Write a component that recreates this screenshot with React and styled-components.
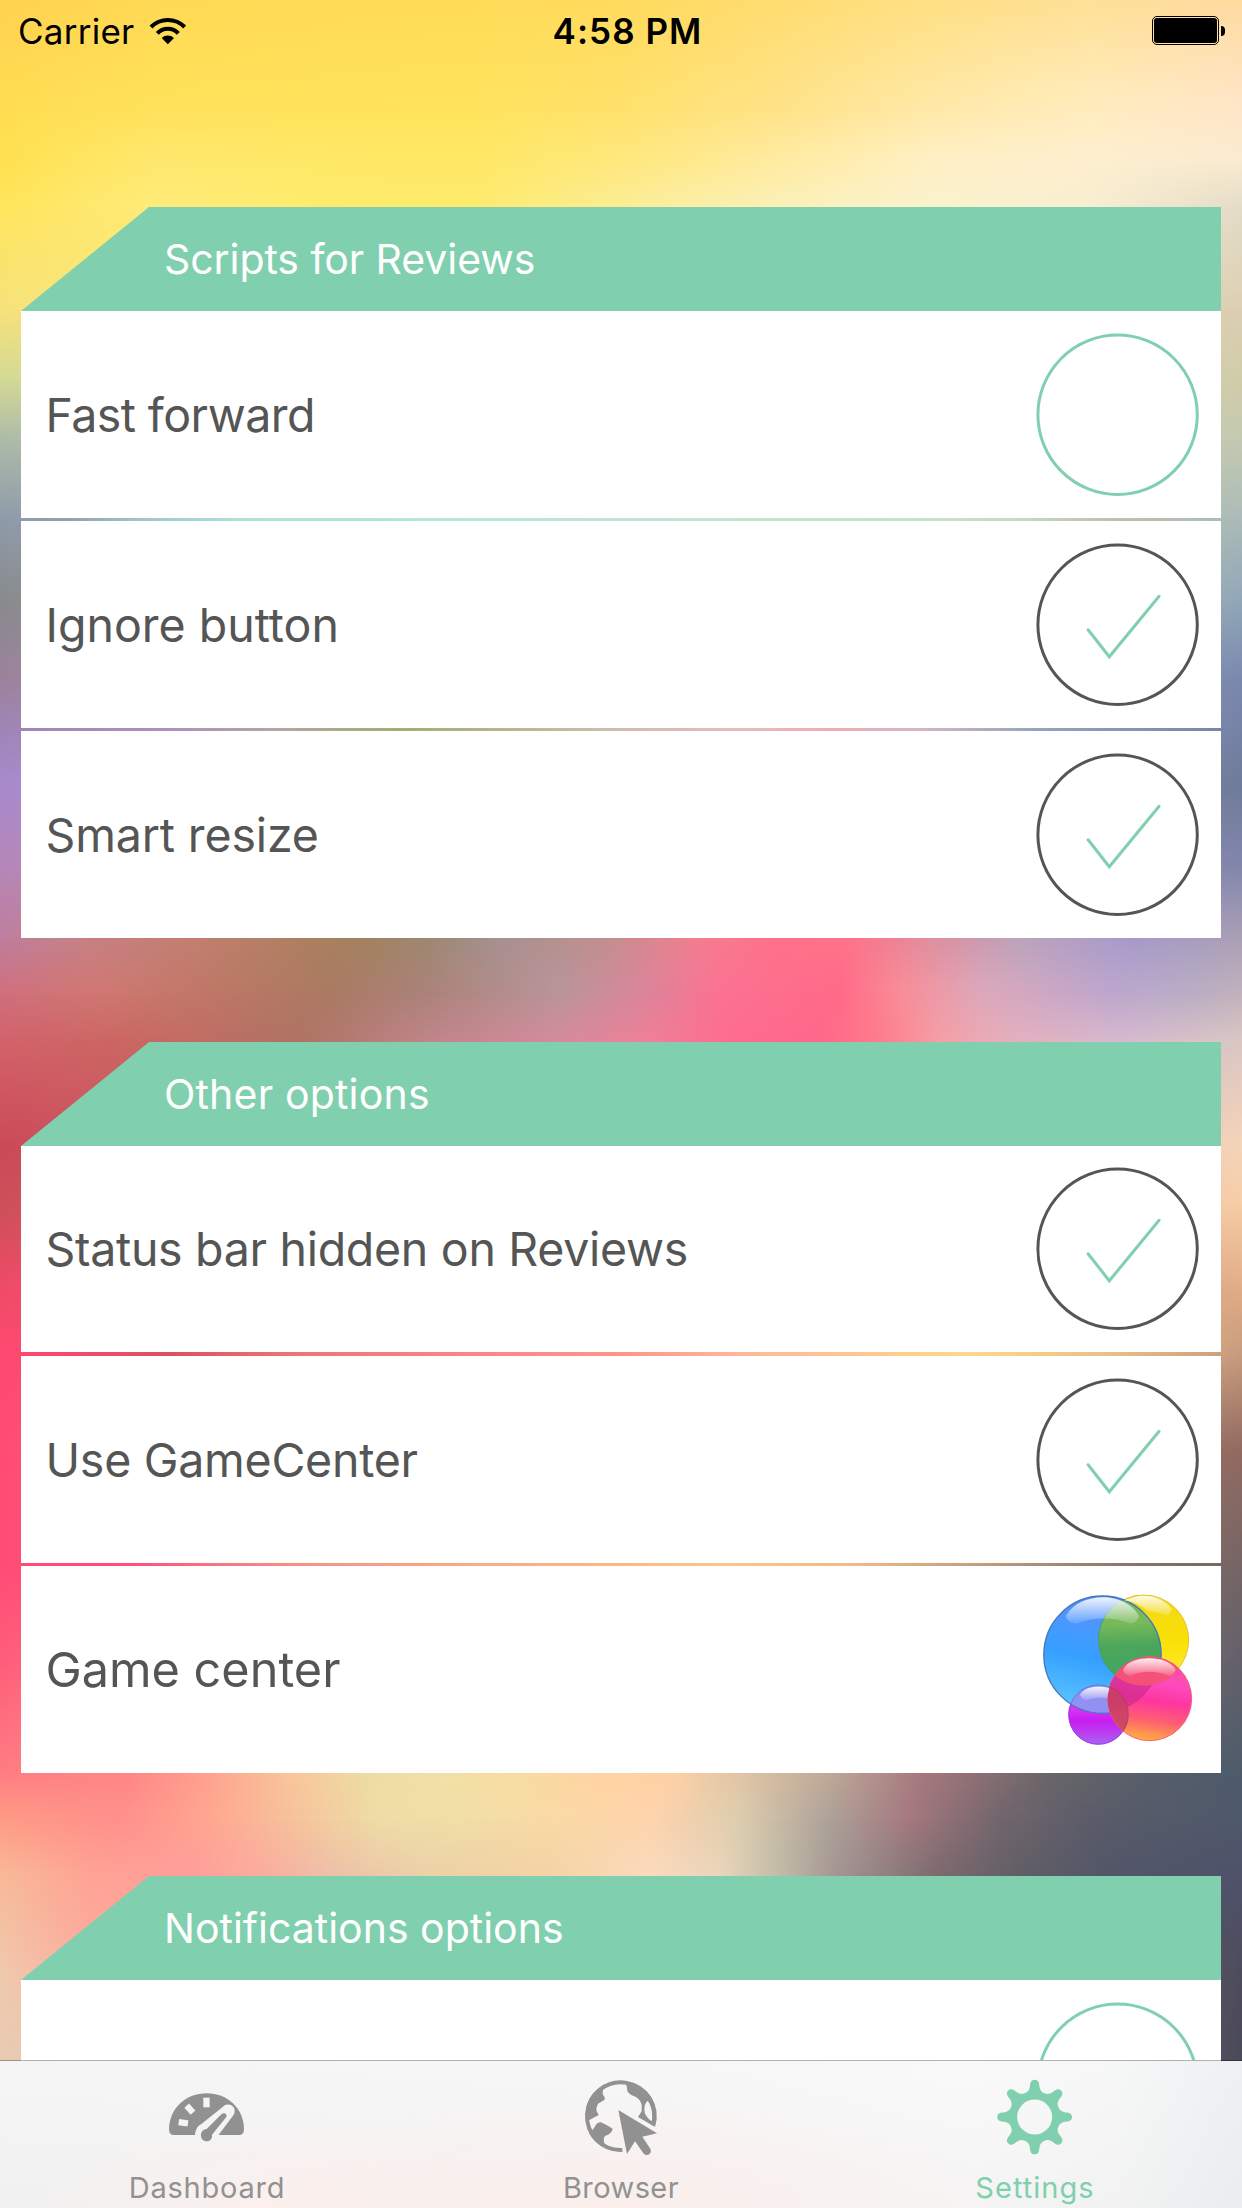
import React from 'react';
import styled, { createGlobalStyle } from 'styled-components';

const MINT = '#80cfae';
const INK = '#555555';
const GREY = '#919191';
const SCREEN_WIDTH = 1242;

const GlobalStyle = createGlobalStyle`
  *, *::before, *::after { box-sizing: border-box; }
  html, body { margin: 0; padding: 0; }
  body { font-family: Inter, "Open Sans", sans-serif; background: #fff; }
  svg { display: block; flex: none; }
`;

/* Wallpaper: horizontal colour rows that fade into each other vertically. */
const wallpaperRows = [
  { y: 0, stops: [[0, '#ffd24f'], [155, '#ffda55'], [466, '#ffdc58'], [621, '#ffdb5e'], [776, '#ffdd70'], [931, '#ffe083'], [1087, '#ffe096'], [1242, '#ffdba0']] },
  { y: 105, stops: [[0, '#ffdd52'], [155, '#ffe15a'], [466, '#ffe35c'], [621, '#ffe16a'], [776, '#ffe287'], [931, '#ffe8a6'], [1087, '#ffecbc'], [1242, '#ffe5c8']] },
  { y: 160, stops: [[0, '#ffe150'], [155, '#ffe86e'], [310, '#ffe967'], [466, '#ffe864'], [621, '#ffe87e'], [776, '#ffeba0'], [931, '#fff0c4'], [1087, '#feefd0'], [1242, '#faebd0']] },
  { y: 207, stops: [[0, '#ffe55c'], [155, '#ffeb7a'], [310, '#ffeb6c'], [466, '#ffea6c'], [621, '#fbed95'], [776, '#fbf0b8'], [931, '#fbf2cd'], [1087, '#f7eed0'], [1242, '#e4dcc8']] },
  { y: 311, stops: [[0, '#f6e27c'], [155, '#fbe77c'], [621, '#eee6a0'], [1242, '#dccfb2']] },
  { y: 380, stops: [[0, '#d3d995'], [621, '#dce3b0'], [1242, '#d0cca9']] },
  { y: 440, stops: [[0, '#acbaa9'], [621, '#c8e4c8'], [1242, '#c4c9b1']] },
  { y: 519, stops: [[0, '#8f9aa9'], [70, '#93a3ae'], [140, '#a2c6c9'], [240, '#abe4d7'], [466, '#b9e7d6'], [776, '#c0e6d0'], [931, '#c6e3c6'], [1010, '#c7dec0'], [1110, '#c0c1ae'], [1242, '#aabbb8']] },
  { y: 600, stops: [[0, '#888a8d'], [621, '#c8c8b8'], [1242, '#92a7b8']] },
  { y: 680, stops: [[0, '#9c829d'], [621, '#c8c0b4'], [1242, '#7a88ae']] },
  { y: 729, stops: [[0, '#9e85b6'], [155, '#ad8fbd'], [270, '#b3a5a5'], [400, '#a6ad72'], [480, '#b4b384'], [600, '#cbbdab'], [740, '#e8bcbc'], [830, '#f0adb2'], [920, '#d4b6c5'], [1040, '#93a5bb'], [1242, '#7682a6']] },
  { y: 785, stops: [[0, '#a78acd'], [621, '#c8a8b0'], [1242, '#6f7b9a']] },
  { y: 865, stops: [[0, '#b587b9'], [621, '#c8a0a0'], [1242, '#8186ac']] },
  { y: 938, stops: [[0, '#bf7e9e'], [80, '#c68186'], [190, '#c37f70'], [310, '#ac805f'], [370, '#a2835f'], [430, '#9e8873'], [500, '#a69291'], [600, '#c0908f'], [700, '#f47d90'], [776, '#ff718a'], [850, '#ff7389'], [930, '#e08f9f'], [1020, '#bba4bc'], [1130, '#a79acb'], [1242, '#aaa0b5']] },
  { y: 990, stops: [[0, '#cf7080'], [100, '#d07872'], [220, '#bd7866'], [330, '#aa7a62'], [430, '#ab837a'], [560, '#b9959a'], [640, '#d8869a'], [720, '#fc7292'], [840, '#ff6a88'], [900, '#f98d97'], [980, '#dda8ba'], [1110, '#bca6cd'], [1190, '#b8acc4'], [1242, '#c0b0bb']] },
  { y: 1042, stops: [[0, '#d2626a'], [110, '#cc6663'], [200, '#c06c64'], [300, '#ae7364'], [430, '#c0858a'], [560, '#d58b9c'], [650, '#f07f98'], [730, '#fd6c8d'], [820, '#ff678a'], [880, '#ff7c8a'], [940, '#f59fa5'], [1010, '#e5afbd'], [1120, '#d6b9cf'], [1242, '#dac7c4']] },
  { y: 1146, stops: [[0, '#cb4a58'], [150, '#cd5760'], [621, '#f58090'], [1242, '#f5d4b9']] },
  { y: 1205, stops: [[0, '#cd4f59'], [621, '#f58890'], [1242, '#f6cda6']] },
  { y: 1290, stops: [[0, '#f04a68'], [621, '#ff9490'], [1242, '#dfac86']] },
  { y: 1354, stops: [[0, '#ff4a71'], [80, '#f24b6c'], [170, '#dc5162'], [290, '#ee7378'], [466, '#fa8588'], [621, '#ff948c'], [750, '#ffba9a'], [870, '#fdca90'], [970, '#fbda8c'], [1100, '#edc287'], [1242, '#c79b7d']] },
  { y: 1450, stops: [[0, '#ff4b74'], [621, '#fbb080'], [1242, '#916a61']] },
  { y: 1564, stops: [[0, '#ff4c76'], [130, '#ff5079'], [220, '#f87683'], [310, '#f69488'], [466, '#f9aa88'], [621, '#fbb985'], [720, '#fcc686'], [850, '#efbc88'], [1000, '#bc987c'], [1130, '#8b7468'], [1242, '#756565']] },
  { y: 1660, stops: [[0, '#ff5d7b'], [621, '#ffd0a0'], [1242, '#63606b']] },
  { y: 1773, stops: [[0, '#ff7d83'], [130, '#ff8787'], [200, '#ff9f8d'], [290, '#f9c69b'], [370, '#eddda3'], [440, '#f2e1a5'], [520, '#f8dca1'], [590, '#ffd4a1'], [670, '#ffd1a6'], [740, '#e0c6a6'], [830, '#bfa898'], [920, '#a7797f'], [980, '#8c7073'], [1050, '#686669'], [1150, '#575e6b'], [1242, '#4d5b6a']] },
  { y: 1820, stops: [[0, '#ff9b85'], [120, '#ff908c'], [210, '#ffa790'], [290, '#f6c19b'], [380, '#eedda6'], [460, '#f0dea7'], [560, '#fad9a5'], [650, '#ffd4ad'], [740, '#dccdaf'], [830, '#aca198'], [910, '#a4787e'], [1000, '#71656c'], [1100, '#595b69'], [1242, '#4e596a']] },
  { y: 1876, stops: [[0, '#f8ba98'], [90, '#ffa395'], [190, '#ff9e9a'], [260, '#fbab9f'], [330, '#eebfa8'], [420, '#ebd0a9'], [540, '#f3d3a4'], [650, '#f9dabd'], [720, '#ead5bb'], [780, '#c0bba6'], [840, '#a29392'], [940, '#7a696d'], [1020, '#605e65'], [1110, '#515668'], [1242, '#4f526a']] },
  { y: 1985, stops: [[0, '#efcbb0'], [60, '#f6b8a4'], [150, '#ffa5a0'], [621, '#f0d0b0'], [1242, '#4c4b5b']] },
  { y: 2060, stops: [[0, '#e7cbb2'], [621, '#e0c8b0'], [1242, '#4b4a59']] },
];

const rowGradient = (stops) =>
  `linear-gradient(90deg, ${stops
    .map(([x, color]) => `${color} ${((x / SCREEN_WIDTH) * 100).toFixed(2)}%`)
    .join(', ')})`;

const Screen = styled.div`
  position: relative;
  width: ${SCREEN_WIDTH}px;
  height: 2208px;
  overflow: hidden;
  display: flex;
  flex-direction: column;
`;

const Wallpaper = styled.div`
  position: absolute;
  inset: 0;
  z-index: 0;
`;

const WallpaperBand = styled.div`
  height: ${(p) => p.$height}px;
  background: ${(p) => p.$from};

  &::before {
    content: '';
    display: block;
    height: 100%;
    background: ${(p) => p.$to};
    mask-image: linear-gradient(180deg, transparent, #000);
  }
`;

const Content = styled.main`
  position: relative;
  z-index: 1;
  height: 2060px;
  overflow: hidden;
  display: flex;
  flex-direction: column;
`;

const StatusBar = styled.header`
  flex: none;
  height: 62px;
  margin-bottom: 145px;
  padding: 0 17px 0 18px;
  display: grid;
  grid-template-columns: 1fr auto 1fr;
  align-items: center;
  color: #000;
  font-size: 35px;
  line-height: 42px;
`;

const StatusLeft = styled.div`
  display: flex;
  align-items: center;
  gap: 15px;
  letter-spacing: 0.25px;
`;

const Clock = styled.div`
  padding-left: 12px;
  font-weight: 600;
  letter-spacing: 1.05px;
`;

const Battery = styled.div`
  justify-self: end;
  display: flex;
  align-items: center;
  gap: 2px;
  margin-bottom: 1px;

  &::after {
    content: '';
    width: 4px;
    height: 10px;
    border-radius: 0 5px 5px 0;
    background: #000;
  }
`;

const BatteryCase = styled.div`
  width: 67px;
  height: 29px;
  padding: 1px;
  border: 1px solid #000;
  border-radius: 5px;
`;

const BatteryCharge = styled.div`
  height: 100%;
  border-radius: 3px;
  background: #000;
`;

const Section = styled.section`
  flex: none;
  margin: 0 21px ${(p) => p.$gap}px;
`;

const SectionHeader = styled.h2`
  display: flex;
  align-items: center;
  height: 104px;
  margin: 0;
  padding: 0 0 1px 143px;
  background: ${MINT};
  clip-path: polygon(128px 0, 100% 0, 100% 100%, 0 100%);
  color: #fff;
  font-size: 41px;
  font-weight: 400;
  letter-spacing: ${(p) => p.$tracking}px;
`;

const Options = styled.div`
  display: flex;
  flex-direction: column;
  gap: 3px;
`;

const Option = styled.div`
  display: flex;
  align-items: center;
  justify-content: space-between;
  height: ${(p) => (p.$short ? 206 : 207)}px;
  margin-bottom: ${(p) => (p.$short ? 1 : 0)}px;
  padding: 0 21px 0 24.500px;
  background: #fff;
  color: ${INK};
`;

const OptionLabel = styled.span`
  font-size: ${(p) => (p.$large ? 48.6 : 46.5)}px;
  letter-spacing: ${(p) => p.$tracking}px;
  white-space: nowrap;
`;

const TabBar = styled.nav`
  position: relative;
  z-index: 1;
  display: grid;
  grid-template-columns: repeat(3, 1fr);
  height: 148px;
  background:
    linear-gradient(90deg, #a18e7d 21px, #b1b1b1 21px, #b1b1b1 1221px, #34343e 1221px) top / 100% 1px no-repeat,
    radial-gradient(ellipse 420px 110px at 600px 148px, rgba(252, 238, 235, 0.9), rgba(252, 238, 235, 0)),
    radial-gradient(ellipse 260px 90px at 290px 148px, rgba(253, 240, 237, 0.9), rgba(253, 240, 237, 0)),
    linear-gradient(180deg, rgba(255, 255, 255, 0.2), rgba(236, 234, 234, 0.25)),
    linear-gradient(90deg, #f3f3f3 0%, #f4f4f4 30%, #f6f5f5 55%, #f8f8f8 78%, #f4f5f5 90%, #e9eef0 100%);
`;

const Tab = styled.div`
  display: flex;
  flex-direction: column;
  align-items: center;
  padding-top: 17px;
  color: ${(p) => (p.$active ? MINT : GREY)};
`;

const TabLabel = styled.span`
  margin-top: 13px;
  font-size: 29px;
  line-height: 36px;
  letter-spacing: ${(p) => p.$tracking}px;
`;

function WifiIcon() {
  return (
    <svg width="38" height="28" viewBox="449 46 114 84" fill="none" stroke="#000" strokeWidth="12.500">
      <path d="M455 76a71 71 0 0 1 101 0" />
      <path d="M474 95a43 43 0 0 1 63 0" />
      <path d="M487 109a27 27 0 0 1 37 0l-18.500 19z" fill="#000" stroke="none" />
    </svg>
  );
}

function ToggleCircle({ checked }) {
  return (
    <svg width="164" height="164" viewBox="-81.600 -81.800 164 164" fill="none">
      <circle r="79.700" stroke={checked ? INK : MINT} strokeWidth="3" />
      {checked && (
        <path d="M-29.500 5-8.300 32 41.500-28.500" stroke={MINT} strokeWidth="3" strokeLinecap="round" />
      )}
    </svg>
  );
}

function GameCenterIcon() {
  return (
    <svg width="160" height="160" viewBox="60 60 480 480">
      <defs>
        <linearGradient id="gcBlue" x1=".6" y1="0" x2=".35" y2="1">
          <stop offset="0" stopColor="#5a8cfb" />
          <stop offset=".3" stopColor="#4b98ff" />
          <stop offset=".55" stopColor="#359fff" />
          <stop offset="1" stopColor="#5cc6ff" />
        </linearGradient>
        <linearGradient id="gcYellow" x1="0" y1="0" x2="0" y2="1">
          <stop offset="0" stopColor="#f2d818" />
          <stop offset=".5" stopColor="#f9e006" />
          <stop offset="1" stopColor="#ffec38" />
        </linearGradient>
        <linearGradient id="gcGreen" x1=".5" y1="0" x2=".55" y2="1">
          <stop offset="0" stopColor="#78b566" />
          <stop offset=".3" stopColor="#78ba5a" />
          <stop offset=".55" stopColor="#4ca65a" />
          <stop offset="1" stopColor="#3ca866" />
        </linearGradient>
        <linearGradient id="gcPink" x1=".6" y1="0" x2=".45" y2="1">
          <stop offset="0" stopColor="#f85690" />
          <stop offset=".3" stopColor="#fd4abf" />
          <stop offset=".52" stopColor="#fd369f" />
          <stop offset=".76" stopColor="#ff6070" />
          <stop offset="1" stopColor="#ffb13b" />
        </linearGradient>
        <linearGradient id="gcPurple" x1="0" y1="0" x2="0" y2="1">
          <stop offset=".4" stopColor="#d835f4" />
          <stop offset=".6" stopColor="#c81cf0" />
          <stop offset="1" stopColor="#ac60f2" />
        </linearGradient>
        <linearGradient id="gcShine" x1="0" y1="0" x2="0" y2="1">
          <stop offset="0" stopColor="#fff" stopOpacity=".9" />
          <stop offset="1" stopColor="#fff" stopOpacity=".12" />
        </linearGradient>
        <clipPath id="inBlue"><circle cx="247.500" cy="254" r="176" /></clipPath>
        <clipPath id="inPink"><circle cx="389" cy="386" r="126" /></clipPath>
      </defs>
      <circle cx="371" cy="210" r="135" fill="url(#gcYellow)" stroke="#dfc632" strokeWidth="3" />
      <circle cx="235" cy="434" r="89" fill="url(#gcPurple)" stroke="#8b35e6" strokeWidth="3" />
      <circle cx="247.500" cy="254" r="176" fill="url(#gcBlue)" />
      <g clipPath="url(#inBlue)">
        <circle cx="371" cy="210" r="136" fill="url(#gcGreen)" stroke="#4b9c70" strokeWidth="3" />
        <circle cx="235" cy="434" r="89" fill="#9390f4" stroke="#6278d2" strokeWidth="3" />
      </g>
      <circle cx="247.500" cy="254" r="176" fill="none" stroke="#4278bd" strokeWidth="4" />
      <path d="M138 137C160 100 205 82 249 82S340 103 357 139C352 154 342 160 331 161C285 141 220 139 169 161C151 158 139 150 138 137Z" fill="url(#gcShine)" />
      <path d="M312 91Q345 77 371 77Q422 77 455 116Q455 130 440 138Q413 126 384 123Q356 98 312 91Z" fill="url(#gcShine)" />
      <circle cx="389" cy="386" r="126" fill="url(#gcPink)" stroke="#f0607c" strokeWidth="3" />
      <g clipPath="url(#inPink)">
        <circle cx="247.500" cy="254" r="174" fill="#c42888" fillOpacity=".58" />
        <circle cx="371" cy="210" r="137" fill="#f65374" fillOpacity=".9" />
        <circle cx="235" cy="434" r="90" fill="#c84065" fillOpacity=".88" stroke="#a33a62" strokeWidth="2" />
      </g>
      <path d="M309 301C320 274 354 265 388 265S455 276 467 300Q461 315 447 318Q388 293 329 318Q313 314 309 301Z" fill="url(#gcShine)" />
      <path d="M180 374C190 356 211 350 235 350S268 353 268 358Q263 370 263 385Q232 379 201 390Q184 387 180 374Z" fill="url(#gcShine)" />
    </svg>
  );
}

function GaugeIcon() {
  return (
    <svg width="80" height="80" viewBox="201 112 240 240">
      <mask id="dialCuts">
        <rect x="200" y="112" width="240" height="240" fill="#fff" />
        <g fill="#000">
          <rect x="310" y="174" width="19" height="29" />
          <rect x="260" y="194.500" width="19" height="28" transform="rotate(-42 269.500 208.500)" />
          <rect x="236" y="240" width="28" height="18.500" transform="rotate(7 250 249)" />
          <path d="M285 288Q285 262 305 252L368 202A19.500 19.500 0 0 1 400 227L354 288Z" />
        </g>
      </mask>
      <path
        d="M207 267C209 205 258 161 320 161S430 205 432 267Q432 286 417 286H222Q207 286 207 267Z"
        fill="currentColor"
        mask="url(#dialCuts)"
      />
      <path
        d="M303 289C302 278 308 270 320 268L365 223C372 217 383 223 379 232L336 285C339 311 304 310 303 289Z"
        fill="currentColor"
      />
    </svg>
  );
}

function GlobeIcon() {
  return (
    <svg width="80" height="80" viewBox="124 112 240 240" fill="currentColor">
      <path
        d="M248 331A101.500 101.500 0 1 1 341 258"
        fill="none"
        stroke="currentColor"
        strokeWidth="12"
      />
      <path d="M184 142L190 154Q186 163 195 172V180L175 192Q168 204 171 215L177 226L149 241L138 236Q136 170 184 142Z" />
      <path d="M148 279Q160 272 165 262Q170 248 184 248L202 257L219 267Q217 282 196 289Q189 298 195 314L190 322Q160 305 148 279Z" />
      <path
        fillRule="evenodd"
        d="M259 130L264 157Q275 169 287 171Q300 176 306 195V215L295 232L345 261Q358 190 320 155Q295 130 259 130ZM324 183Q333 194 337 216L338 244Q328 243 316 222Q310 195 324 183Z"
      />
      <path d="M236 211L352 281L308 291L331 326C341 341 321 354 311 341L286 305L262 343Z" />
    </svg>
  );
}

const toothOutline = [
  [-29.4, -71], [-20.2, -74.8], [-17, -80], [-14.5, -90],
  [-13.5, -100], [-13, -112], [0, -112],
  [13, -112], [13.5, -100], [14.5, -90],
  [17, -80], [20.2, -74.8], [29.4, -71],
];

const gearPath = (() => {
  let d = '';
  for (let i = 0; i < 8; i += 1) {
    const a = (i * Math.PI) / 4;
    const p = toothOutline.map(([x, y]) =>
      `${(x * Math.cos(a) - y * Math.sin(a)).toFixed(2)} ${(x * Math.sin(a) + y * Math.cos(a)).toFixed(2)}`);
    d += `${i ? 'L' : 'M'}${p[0]}C${p[1]} ${p[2]} ${p[3]}C${p[4]} ${p[5]} ${p[6]}C${p[7]} ${p[8]} ${p[9]}C${p[10]} ${p[11]} ${p[12]}`;
  }
  return `${d}ZM52.500 0A52.500 52.500 0 1 0 -52.500 0A52.500 52.500 0 1 0 52.500 0Z`;
})();

function GearIcon() {
  return (
    <svg width="80" height="80" viewBox="-119 -120 240 240">
      <path d={gearPath} fill="currentColor" fillRule="evenodd" />
    </svg>
  );
}

const sections = [
  {
    title: 'Scripts for Reviews',
    tracking: -0.08,
    gap: 104,
    options: [
      { label: 'Fast forward', tracking: -0.58, checked: false },
      { label: 'Ignore button', tracking: 0, checked: true },
      { label: 'Smart resize', tracking: -0.14, checked: true },
    ],
  },
  {
    title: 'Other options',
    tracking: 0.18,
    gap: 103,
    options: [
      { label: 'Status bar hidden on Reviews', tracking: -0.3, checked: true, short: true },
      { label: 'Use GameCenter', tracking: -0.26, checked: true },
      { label: 'Game center', tracking: 0, link: true },
    ],
  },
  {
    title: 'Notifications options',
    tracking: 0,
    gap: 0,
    options: [{ label: '', tracking: 0, checked: false }],
  },
];

export default function App() {
  return (
    <>
      <GlobalStyle />
      <Screen>
        <Wallpaper>
          {wallpaperRows.slice(0, -1).map((row, i) => (
            <WallpaperBand
              key={row.y}
              $height={wallpaperRows[i + 1].y - row.y}
              $from={rowGradient(row.stops)}
              $to={rowGradient(wallpaperRows[i + 1].stops)}
            />
          ))}
        </Wallpaper>
        <Content>
          <StatusBar>
            <StatusLeft>
              <span>Carrier</span>
              <WifiIcon />
            </StatusLeft>
            <Clock>4:58 PM</Clock>
            <Battery>
              <BatteryCase>
                <BatteryCharge />
              </BatteryCase>
            </Battery>
          </StatusBar>
          {sections.map((section) => (
            <Section key={section.title} $gap={section.gap}>
              <SectionHeader $tracking={section.tracking}>{section.title}</SectionHeader>
              <Options>
                {section.options.map((option) => (
                  <Option key={option.label} $short={option.short}>
                    <OptionLabel $tracking={option.tracking} $large={option.link}>
                      {option.label}
                    </OptionLabel>
                    {option.link ? <GameCenterIcon /> : <ToggleCircle checked={option.checked} />}
                  </Option>
                ))}
              </Options>
            </Section>
          ))}
        </Content>
        <TabBar>
          <Tab>
            <GaugeIcon />
            <TabLabel $tracking={0.78}>Dashboard</TabLabel>
          </Tab>
          <Tab>
            <GlobeIcon />
            <TabLabel $tracking={0.42}>Browser</TabLabel>
          </Tab>
          <Tab $active>
            <GearIcon />
            <TabLabel $tracking={1.04}>Settings</TabLabel>
          </Tab>
        </TabBar>
      </Screen>
    </>
  );
}
